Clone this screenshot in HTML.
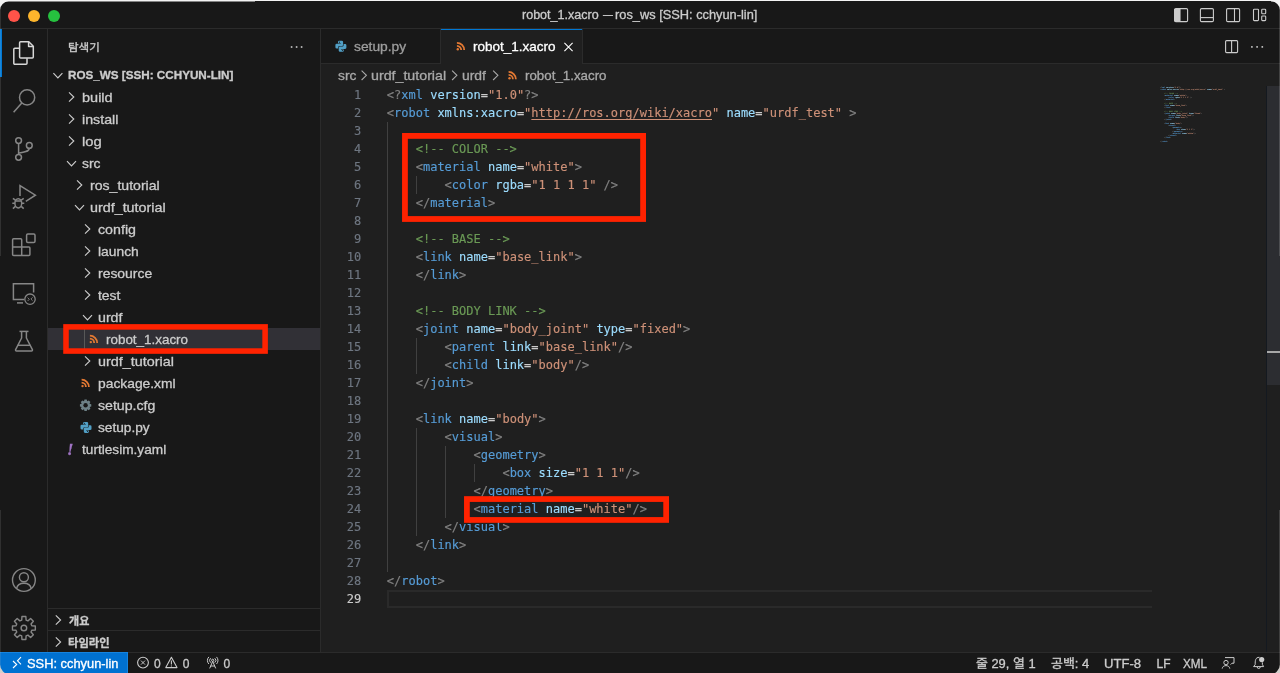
<!DOCTYPE html>
<html lang="ko"><head><meta charset="utf-8"><title>robot_1.xacro — ros_ws [SSH: cchyun-lin]</title>
<style>
html,body{margin:0;padding:0;width:1280px;height:673px;overflow:hidden;background:linear-gradient(#f3f3f3,#ececec 90%,#d3cfcb)}
#page{position:absolute;left:0;top:0;width:1280px;height:676px;background:#181818;clip-path:inset(1.5px 0.17px 1.5px 0.12px round 8.5px 8.5px 10px 10px);will-change:transform;transform:translateZ(0)}
#page>div,#page>span,#page>svg{position:absolute}
.x{font-family:"Liberation Sans","Noto Sans CJK KR",sans-serif;white-space:pre;line-height:20px;height:20px;transform-origin:0 50%;-webkit-text-stroke:0.3px currentColor}

.bg{background:#181818}
.ln{font-family:"DejaVu Sans Mono","Liberation Mono",monospace;font-size:12px;line-height:18px;height:18px;left:321px;width:40.2px;text-align:right;-webkit-text-stroke:0.15px currentColor;position:absolute;white-space:pre}
.cl{font-family:"DejaVu Sans Mono","Liberation Mono",monospace;font-size:12px;line-height:18px;height:18px;left:386.8px;position:absolute;white-space:pre;color:#cccccc;-webkit-text-stroke:0.15px currentColor}
.p{color:#808080}.t{color:#569cd6}.a{color:#9cdcfe}.s{color:#ce9178}.c{color:#6a9955}.d{color:#cccccc}
.u{text-decoration:underline;text-underline-offset:2px;text-decoration-thickness:1px}
.ig{width:1px;background:#404040}
.ml{font-family:"DejaVu Sans Mono","Liberation Mono",monospace;position:absolute;left:1160px;font-size:1.661px;line-height:2px;height:2px;white-space:pre;font-weight:bold}
.ml .u{text-decoration:none}
.red{border:6px solid #ff2200;box-sizing:border-box}
</style></head><body>
<div id="page">
<!-- title bar -->
<div style="left:0;top:0;width:1280px;height:28px;background:#181818"></div>
<div style="left:0;top:28px;width:1280px;height:1px;background:#2b2b2b"></div>
<!-- activity bar -->
<div style="left:0;top:29px;width:47px;height:623px;background:#181818"></div>
<div style="left:47px;top:29px;width:1px;height:623px;background:#2b2b2b"></div>
<div style="left:0;top:29px;width:2px;height:48px;background:#0078d4"></div>
<!-- sidebar -->
<div style="left:48px;top:29px;width:272px;height:623px;background:#181818"></div>
<div style="left:320px;top:29px;width:1px;height:623px;background:#2b2b2b"></div>
<div style="left:48px;top:328px;width:272px;height:22px;background:#313036"></div>
<div style="left:84px;top:328px;width:1px;height:22px;background:#585858"></div>
<div style="left:48px;top:608px;width:272px;height:1px;background:#2b2b2b"></div>
<div style="left:48px;top:630px;width:272px;height:1px;background:#2b2b2b"></div>
<!-- editor -->
<div style="left:321px;top:29px;width:959px;height:35px;background:#181818"></div>
<div style="left:321px;top:63px;width:959px;height:1px;background:#2b2b2b"></div>
<div style="left:440px;top:29px;width:1px;height:35px;background:#2b2b2b"></div>
<div style="left:441px;top:29px;width:141px;height:35px;background:#1f1f1f"></div>
<div style="left:441px;top:29px;width:141px;height:1px;background:#0078d4"></div>
<div style="left:582px;top:29px;width:1px;height:35px;background:#2b2b2b"></div>
<div style="left:321px;top:64px;width:959px;height:588px;background:#1f1f1f"></div>
<!-- current line -->
<div style="left:387px;top:590px;width:765px;height:18px;box-sizing:border-box;border:2px solid #2a2a2a;border-right:none"></div>
<div class="ig" style="left:387px;top:122px;height:450px"></div><div class="ig" style="left:416px;top:176px;height:18px"></div><div class="ig" style="left:416px;top:338px;height:36px"></div><div class="ig" style="left:416px;top:428px;height:108px"></div><div class="ig" style="left:445px;top:446px;height:72px"></div><div class="ig" style="left:474px;top:464px;height:18px"></div>
<!-- scrollbar -->
<div style="left:1266px;top:86px;width:1px;height:566px;background:#141920"></div>
<div style="left:1267px;top:86px;width:13px;height:299px;background:#2c2d31"></div>
<div style="left:1267px;top:351px;width:13px;height:2px;background:#a8a8a8"></div>
<!-- code -->
<div class="ln" style="top:86px;color:#6e7681">1</div><div class="cl" style="top:86px"><span class="p">&lt;?</span><span class="t">xml</span> <span class="a">version</span><span class="d">=</span><span class="s">&quot;1.0&quot;</span><span class="p">?&gt;</span></div><div class="ln" style="top:104px;color:#6e7681">2</div><div class="cl" style="top:104px"><span class="p">&lt;</span><span class="t">robot</span> <span class="a">xmlns:xacro</span><span class="d">=</span><span class="s">&quot;</span><span class="s u">http://ros.org/wiki/xacro</span><span class="s">&quot;</span> <span class="a">name</span><span class="d">=</span><span class="s">&quot;urdf_test&quot;</span> <span class="p">&gt;</span></div><div class="ln" style="top:122px;color:#6e7681">3</div><div class="ln" style="top:140px;color:#6e7681">4</div><div class="cl" style="top:140px">    <span class="c">&lt;!-- COLOR --&gt;</span></div><div class="ln" style="top:158px;color:#6e7681">5</div><div class="cl" style="top:158px">    <span class="p">&lt;</span><span class="t">material</span> <span class="a">name</span><span class="d">=</span><span class="s">&quot;white&quot;</span><span class="p">&gt;</span></div><div class="ln" style="top:176px;color:#6e7681">6</div><div class="cl" style="top:176px">        <span class="p">&lt;</span><span class="t">color</span> <span class="a">rgba</span><span class="d">=</span><span class="s">&quot;1 1 1 1&quot;</span> <span class="p">/&gt;</span></div><div class="ln" style="top:194px;color:#6e7681">7</div><div class="cl" style="top:194px">    <span class="p">&lt;/</span><span class="t">material</span><span class="p">&gt;</span></div><div class="ln" style="top:212px;color:#6e7681">8</div><div class="ln" style="top:230px;color:#6e7681">9</div><div class="cl" style="top:230px">    <span class="c">&lt;!-- BASE --&gt;</span></div><div class="ln" style="top:248px;color:#6e7681">10</div><div class="cl" style="top:248px">    <span class="p">&lt;</span><span class="t">link</span> <span class="a">name</span><span class="d">=</span><span class="s">&quot;base_link&quot;</span><span class="p">&gt;</span></div><div class="ln" style="top:266px;color:#6e7681">11</div><div class="cl" style="top:266px">    <span class="p">&lt;/</span><span class="t">link</span><span class="p">&gt;</span></div><div class="ln" style="top:284px;color:#6e7681">12</div><div class="ln" style="top:302px;color:#6e7681">13</div><div class="cl" style="top:302px">    <span class="c">&lt;!-- BODY LINK --&gt;</span></div><div class="ln" style="top:320px;color:#6e7681">14</div><div class="cl" style="top:320px">    <span class="p">&lt;</span><span class="t">joint</span> <span class="a">name</span><span class="d">=</span><span class="s">&quot;body_joint&quot;</span> <span class="a">type</span><span class="d">=</span><span class="s">&quot;fixed&quot;</span><span class="p">&gt;</span></div><div class="ln" style="top:338px;color:#6e7681">15</div><div class="cl" style="top:338px">        <span class="p">&lt;</span><span class="t">parent</span> <span class="a">link</span><span class="d">=</span><span class="s">&quot;base_link&quot;</span><span class="p">/&gt;</span></div><div class="ln" style="top:356px;color:#6e7681">16</div><div class="cl" style="top:356px">        <span class="p">&lt;</span><span class="t">child</span> <span class="a">link</span><span class="d">=</span><span class="s">&quot;body&quot;</span><span class="p">/&gt;</span></div><div class="ln" style="top:374px;color:#6e7681">17</div><div class="cl" style="top:374px">    <span class="p">&lt;/</span><span class="t">joint</span><span class="p">&gt;</span></div><div class="ln" style="top:392px;color:#6e7681">18</div><div class="ln" style="top:410px;color:#6e7681">19</div><div class="cl" style="top:410px">    <span class="p">&lt;</span><span class="t">link</span> <span class="a">name</span><span class="d">=</span><span class="s">&quot;body&quot;</span><span class="p">&gt;</span></div><div class="ln" style="top:428px;color:#6e7681">20</div><div class="cl" style="top:428px">        <span class="p">&lt;</span><span class="t">visual</span><span class="p">&gt;</span></div><div class="ln" style="top:446px;color:#6e7681">21</div><div class="cl" style="top:446px">            <span class="p">&lt;</span><span class="t">geometry</span><span class="p">&gt;</span></div><div class="ln" style="top:464px;color:#6e7681">22</div><div class="cl" style="top:464px">                <span class="p">&lt;</span><span class="t">box</span> <span class="a">size</span><span class="d">=</span><span class="s">&quot;1 1 1&quot;</span><span class="p">/&gt;</span></div><div class="ln" style="top:482px;color:#6e7681">23</div><div class="cl" style="top:482px">            <span class="p">&lt;/</span><span class="t">geometry</span><span class="p">&gt;</span></div><div class="ln" style="top:500px;color:#6e7681">24</div><div class="cl" style="top:500px">            <span class="p">&lt;</span><span class="t">material</span> <span class="a">name</span><span class="d">=</span><span class="s">&quot;white&quot;</span><span class="p">/&gt;</span></div><div class="ln" style="top:518px;color:#6e7681">25</div><div class="cl" style="top:518px">        <span class="p">&lt;/</span><span class="t">visual</span><span class="p">&gt;</span></div><div class="ln" style="top:536px;color:#6e7681">26</div><div class="cl" style="top:536px">    <span class="p">&lt;/</span><span class="t">link</span><span class="p">&gt;</span></div><div class="ln" style="top:554px;color:#6e7681">27</div><div class="ln" style="top:572px;color:#6e7681">28</div><div class="cl" style="top:572px"><span class="p">&lt;/</span><span class="t">robot</span><span class="p">&gt;</span></div><div class="ln" style="top:590px;color:#cccccc">29</div>
<!-- status bar -->
<div style="left:0;top:652px;width:1280px;height:23px;background:#181818"></div>
<div style="left:0;top:652px;width:1280px;height:1px;background:#2b2b2b"></div>
<div style="left:0;top:652px;width:128px;height:23px;background:#0071d1;box-sizing:border-box;border-top:1px solid #1683de;border-right:1px solid #1683de"></div>
<!-- traffic lights -->
<div style="left:8px;top:10px;width:12px;height:12px;border-radius:50%;background:#ff5349"></div>
<div style="left:28px;top:10px;width:12px;height:12px;border-radius:50%;background:#fdb52c"></div>
<div style="left:48px;top:10px;width:12px;height:12px;border-radius:50%;background:#26c13f"></div>
<span class="x" style="left:522.1px;top:4.7px;font-size:12.00px;font-weight:400;color:#cccccc;transform:scaleX(1.0444);">robot_1.xacro</span><span class="x" style="left:602.6px;top:4.9px;font-size:12.00px;font-weight:400;color:#cccccc;transform:scaleX(0.8250);">—</span><span class="x" style="left:614.9px;top:4.7px;font-size:12.00px;font-weight:400;color:#cccccc;transform:scaleX(1.0674);">ros_ws [SSH: cchyun-lin]</span><span class="x" style="left:67.9px;top:37.8px;font-size:10.40px;font-weight:400;color:#cccccc;transform:scaleX(1.1111);">탐색기</span><span class="x" style="left:67.7px;top:64.5px;font-size:11.00px;font-weight:700;color:#cccccc;transform:scaleX(1.0613);">ROS_WS [SSH: CCHYUN-LIN]</span><span class="x" style="left:82.0px;top:87.5px;font-size:13.00px;font-weight:400;color:#cccccc;transform:scaleX(1.1154);">build</span><span class="x" style="left:82.0px;top:109.5px;font-size:13.00px;font-weight:400;color:#cccccc;transform:scaleX(1.0938);">install</span><span class="x" style="left:82.0px;top:131.5px;font-size:13.00px;font-weight:400;color:#cccccc;transform:scaleX(1.1375);">log</span><span class="x" style="left:82.0px;top:153.5px;font-size:13.00px;font-weight:400;color:#cccccc;transform:scaleX(1.0706);">src</span><span class="x" style="left:90.0px;top:175.5px;font-size:13.00px;font-weight:400;color:#cccccc;transform:scaleX(1.0841);">ros_tutorial</span><span class="x" style="left:90.0px;top:197.5px;font-size:13.00px;font-weight:400;color:#cccccc;transform:scaleX(1.1015);">urdf_tutorial</span><span class="x" style="left:98.1px;top:219.5px;font-size:13.00px;font-weight:400;color:#cccccc;transform:scaleX(1.0941);">config</span><span class="x" style="left:98.1px;top:241.5px;font-size:13.00px;font-weight:400;color:#cccccc;transform:scaleX(1.0649);">launch</span><span class="x" style="left:98.1px;top:263.5px;font-size:13.00px;font-weight:400;color:#cccccc;transform:scaleX(1.0714);">resource</span><span class="x" style="left:98.1px;top:285.5px;font-size:13.00px;font-weight:400;color:#cccccc;transform:scaleX(1.0714);">test</span><span class="x" style="left:98.1px;top:307.5px;font-size:13.00px;font-weight:400;color:#cccccc;transform:scaleX(1.0909);">urdf</span><span class="x" style="left:106.0px;top:329.5px;font-size:13.00px;font-weight:400;color:#cccccc;transform:scaleX(1.0321);">robot_1.xacro</span><span class="x" style="left:98.1px;top:351.5px;font-size:13.00px;font-weight:400;color:#cccccc;transform:scaleX(1.1045);">urdf_tutorial</span><span class="x" style="left:98.1px;top:373.5px;font-size:13.00px;font-weight:400;color:#cccccc;transform:scaleX(1.0634);">package.xml</span><span class="x" style="left:98.1px;top:395.5px;font-size:13.00px;font-weight:400;color:#cccccc;transform:scaleX(1.0865);">setup.cfg</span><span class="x" style="left:98.1px;top:417.5px;font-size:13.00px;font-weight:400;color:#cccccc;transform:scaleX(1.0510);">setup.py</span><span class="x" style="left:82.0px;top:439.5px;font-size:13.00px;font-weight:400;color:#cccccc;transform:scaleX(1.0500);">turtlesim.yaml</span><span class="x" style="left:67.1px;top:440.3px;font-size:16.50px;font-weight:700;color:#a074c4;transform:scaleX(1.0000);font-family:'Liberation Serif',serif;font-style:italic;-webkit-text-stroke:0.3px #a074c4;">!</span><span class="x" style="left:69.0px;top:610.5px;font-size:11.00px;font-weight:700;color:#cccccc;transform:scaleX(1.0050);">개요</span><span class="x" style="left:68.0px;top:632.5px;font-size:11.00px;font-weight:700;color:#cccccc;transform:scaleX(1.0308);">타임라인</span><span class="x" style="left:353.5px;top:37.0px;font-size:13.00px;font-weight:400;color:#9d9d9d;transform:scaleX(1.0612);">setup.py</span><span class="x" style="left:472.5px;top:37.0px;font-size:13.00px;font-weight:400;color:#ffffff;transform:scaleX(1.0385);">robot_1.xacro</span><span class="x" style="left:337.5px;top:65.7px;font-size:13.00px;font-weight:400;color:#a9a9a9;transform:scaleX(1.0588);">src</span><span class="x" style="left:371.1px;top:65.7px;font-size:13.00px;font-weight:400;color:#a9a9a9;transform:scaleX(1.0940);">urdf_tutorial</span><span class="x" style="left:461.9px;top:65.7px;font-size:13.00px;font-weight:400;color:#a9a9a9;transform:scaleX(1.0682);">urdf</span><span class="x" style="left:525.0px;top:65.7px;font-size:13.00px;font-weight:400;color:#a9a9a9;transform:scaleX(1.0256);">robot_1.xacro</span><span class="x" style="left:27.2px;top:653.7px;font-size:12.00px;font-weight:400;color:#ffffff;transform:scaleX(1.0714);">SSH: cchyun-lin</span><span class="x" style="left:154.1px;top:653.7px;font-size:12.00px;font-weight:400;color:#cccccc;transform:scaleX(1.0000);">0</span><span class="x" style="left:182.7px;top:653.7px;font-size:12.00px;font-weight:400;color:#cccccc;transform:scaleX(1.0000);">0</span><span class="x" style="left:223.5px;top:653.7px;font-size:12.00px;font-weight:400;color:#cccccc;transform:scaleX(1.0000);">0</span><span class="x" style="left:975.7px;top:653.7px;font-size:12.00px;font-weight:400;color:#cccccc;transform:scaleX(1.0741);">줄 29, 열 1</span><span class="x" style="left:1050.7px;top:653.7px;font-size:12.00px;font-weight:400;color:#cccccc;transform:scaleX(1.0794);">공백: 4</span><span class="x" style="left:1103.9px;top:653.7px;font-size:12.00px;font-weight:400;color:#cccccc;transform:scaleX(1.0909);">UTF-8</span><span class="x" style="left:1156.5px;top:653.7px;font-size:12.00px;font-weight:400;color:#cccccc;transform:scaleX(1.0000);">LF</span><span class="x" style="left:1182.5px;top:653.7px;font-size:12.00px;font-weight:400;color:#cccccc;transform:scaleX(0.9720);">XML</span>
<div id="mini" style="left:1152px;top:80px;width:114px;height:80px;overflow:hidden"><div style="position:absolute;left:-1152px;top:-80px"><div class="ml" style="top:86px"><span class="p">&lt;?</span><span class="t">xml</span> <span class="a">version</span><span class="d">=</span><span class="s">&quot;1.0&quot;</span><span class="p">?&gt;</span></div><div class="ml" style="top:88px"><span class="p">&lt;</span><span class="t">robot</span> <span class="a">xmlns:xacro</span><span class="d">=</span><span class="s">&quot;</span><span class="s u">http://ros.org/wiki/xacro</span><span class="s">&quot;</span> <span class="a">name</span><span class="d">=</span><span class="s">&quot;urdf_test&quot;</span> <span class="p">&gt;</span></div><div class="ml" style="top:92px">    <span class="c">&lt;!-- COLOR --&gt;</span></div><div class="ml" style="top:94px">    <span class="p">&lt;</span><span class="t">material</span> <span class="a">name</span><span class="d">=</span><span class="s">&quot;white&quot;</span><span class="p">&gt;</span></div><div class="ml" style="top:96px">        <span class="p">&lt;</span><span class="t">color</span> <span class="a">rgba</span><span class="d">=</span><span class="s">&quot;1 1 1 1&quot;</span> <span class="p">/&gt;</span></div><div class="ml" style="top:98px">    <span class="p">&lt;/</span><span class="t">material</span><span class="p">&gt;</span></div><div class="ml" style="top:102px">    <span class="c">&lt;!-- BASE --&gt;</span></div><div class="ml" style="top:104px">    <span class="p">&lt;</span><span class="t">link</span> <span class="a">name</span><span class="d">=</span><span class="s">&quot;base_link&quot;</span><span class="p">&gt;</span></div><div class="ml" style="top:106px">    <span class="p">&lt;/</span><span class="t">link</span><span class="p">&gt;</span></div><div class="ml" style="top:110px">    <span class="c">&lt;!-- BODY LINK --&gt;</span></div><div class="ml" style="top:112px">    <span class="p">&lt;</span><span class="t">joint</span> <span class="a">name</span><span class="d">=</span><span class="s">&quot;body_joint&quot;</span> <span class="a">type</span><span class="d">=</span><span class="s">&quot;fixed&quot;</span><span class="p">&gt;</span></div><div class="ml" style="top:114px">        <span class="p">&lt;</span><span class="t">parent</span> <span class="a">link</span><span class="d">=</span><span class="s">&quot;base_link&quot;</span><span class="p">/&gt;</span></div><div class="ml" style="top:116px">        <span class="p">&lt;</span><span class="t">child</span> <span class="a">link</span><span class="d">=</span><span class="s">&quot;body&quot;</span><span class="p">/&gt;</span></div><div class="ml" style="top:118px">    <span class="p">&lt;/</span><span class="t">joint</span><span class="p">&gt;</span></div><div class="ml" style="top:122px">    <span class="p">&lt;</span><span class="t">link</span> <span class="a">name</span><span class="d">=</span><span class="s">&quot;body&quot;</span><span class="p">&gt;</span></div><div class="ml" style="top:124px">        <span class="p">&lt;</span><span class="t">visual</span><span class="p">&gt;</span></div><div class="ml" style="top:126px">            <span class="p">&lt;</span><span class="t">geometry</span><span class="p">&gt;</span></div><div class="ml" style="top:128px">                <span class="p">&lt;</span><span class="t">box</span> <span class="a">size</span><span class="d">=</span><span class="s">&quot;1 1 1&quot;</span><span class="p">/&gt;</span></div><div class="ml" style="top:130px">            <span class="p">&lt;/</span><span class="t">geometry</span><span class="p">&gt;</span></div><div class="ml" style="top:132px">            <span class="p">&lt;</span><span class="t">material</span> <span class="a">name</span><span class="d">=</span><span class="s">&quot;white&quot;</span><span class="p">/&gt;</span></div><div class="ml" style="top:134px">        <span class="p">&lt;/</span><span class="t">visual</span><span class="p">&gt;</span></div><div class="ml" style="top:136px">    <span class="p">&lt;/</span><span class="t">link</span><span class="p">&gt;</span></div><div class="ml" style="top:140px"><span class="p">&lt;/</span><span class="t">robot</span><span class="p">&gt;</span></div></div></div>
<svg id="icons" style="left:0;top:0" width="1280" height="673" viewBox="0 0 1280 673" fill="none"><path d="M53.40 73.20L57.90 77.90L62.40 73.20" stroke="#cccccc" stroke-width="1.15"/>
<path d="M69.00 92.30L73.80 97.00L69.00 101.70" stroke="#cccccc" stroke-width="1.1"/>
<path d="M69.00 114.30L73.80 119.00L69.00 123.70" stroke="#cccccc" stroke-width="1.1"/>
<path d="M69.00 136.30L73.80 141.00L69.00 145.70" stroke="#cccccc" stroke-width="1.1"/>
<path d="M67.00 161.20L71.50 165.90L76.00 161.20" stroke="#cccccc" stroke-width="1.15"/>
<path d="M77.00 180.30L81.80 185.00L77.00 189.70" stroke="#cccccc" stroke-width="1.1"/>
<path d="M75.00 205.20L79.50 209.90L84.00 205.20" stroke="#cccccc" stroke-width="1.15"/>
<path d="M85.00 224.30L89.80 229.00L85.00 233.70" stroke="#cccccc" stroke-width="1.1"/>
<path d="M85.00 246.30L89.80 251.00L85.00 255.70" stroke="#cccccc" stroke-width="1.1"/>
<path d="M85.00 268.30L89.80 273.00L85.00 277.70" stroke="#cccccc" stroke-width="1.1"/>
<path d="M85.00 290.30L89.80 295.00L85.00 299.70" stroke="#cccccc" stroke-width="1.1"/>
<path d="M83.00 315.20L87.50 319.90L92.00 315.20" stroke="#cccccc" stroke-width="1.15"/>
<path d="M85.00 356.30L89.80 361.00L85.00 365.70" stroke="#cccccc" stroke-width="1.1"/>
<path d="M55.80 615.30L60.60 620.00L55.80 624.70" stroke="#cccccc" stroke-width="1.1"/>
<path d="M55.80 637.30L60.60 642.00L55.80 646.70" stroke="#cccccc" stroke-width="1.1"/>
<g stroke="#e37933" stroke-width="1.8" fill="none"><circle cx="90.80" cy="342.10" r="1.2" fill="#e37933" stroke="none"/><path d="M89.90 338.70A4.3 4.3 0 0 1 94.20 343.00"/><path d="M89.90 335.70A7.3 7.3 0 0 1 97.20 343.00"/></g>
<g stroke="#e37933" stroke-width="1.8" fill="none"><circle cx="82.50" cy="386.10" r="1.2" fill="#e37933" stroke="none"/><path d="M81.60 382.70A4.3 4.3 0 0 1 85.90 387.00"/><path d="M81.60 379.70A7.3 7.3 0 0 1 88.90 387.00"/></g>
<path d="M91.28 404.15L91.28 406.45L89.59 406.89L89.55 407.00L90.43 408.50L88.80 410.13L87.30 409.25L87.19 409.29L86.75 410.98L84.45 410.98L84.01 409.29L83.90 409.25L82.40 410.13L80.77 408.50L81.65 407.00L81.61 406.89L79.92 406.45L79.92 404.15L81.61 403.71L81.65 403.60L80.77 402.10L82.40 400.47L83.90 401.35L84.01 401.31L84.45 399.62L86.75 399.62L87.19 401.31L87.30 401.35L88.80 400.47L90.43 402.10L89.55 403.60L89.59 403.71Z" fill="#6d8086"/><circle cx="85.6" cy="405.3" r="2.2" fill="#181818"/>
<g transform="translate(80.50 421.90)" fill="#519fc5"><path d="M3.9 0H6.4Q7.7 0 7.7 1.3V4Q7.7 5.3 6.4 5.3H4Q2.8 5.3 2.8 6.5V7.7H1.3Q0 7.7 0 6.4V4.2Q0 2.9 1.3 2.9H5.4V2.4H2.6V1.3Q2.6 0 3.9 0Z"/><path d="M3.9 0H6.4Q7.7 0 7.7 1.3V4Q7.7 5.3 6.4 5.3H4Q2.8 5.3 2.8 6.5V7.7H1.3Q0 7.7 0 6.4V4.2Q0 2.9 1.3 2.9H5.4V2.4H2.6V1.3Q2.6 0 3.9 0Z" transform="rotate(180 5.5 5.5)"/><circle cx="4" cy="1.35" r="0.55" fill="#181818"/><circle cx="7" cy="9.65" r="0.55" fill="#181818"/></g>
<path d="M361.60 70.60L366.40 75.30L361.60 80.00" stroke="#a9a9a9" stroke-width="1.1"/>
<path d="M452.10 70.60L456.90 75.30L452.10 80.00" stroke="#a9a9a9" stroke-width="1.1"/>
<path d="M493.10 70.60L497.90 75.30L493.10 80.00" stroke="#a9a9a9" stroke-width="1.1"/>
<g stroke="#e37933" stroke-width="1.8" fill="none"><circle cx="509.50" cy="78.30" r="1.2" fill="#e37933" stroke="none"/><path d="M508.60 74.90A4.3 4.3 0 0 1 512.90 79.20"/><path d="M508.60 71.90A7.3 7.3 0 0 1 515.90 79.20"/></g>
<g transform="translate(335.40 40.80)" fill="#519fc5"><path d="M3.9 0H6.4Q7.7 0 7.7 1.3V4Q7.7 5.3 6.4 5.3H4Q2.8 5.3 2.8 6.5V7.7H1.3Q0 7.7 0 6.4V4.2Q0 2.9 1.3 2.9H5.4V2.4H2.6V1.3Q2.6 0 3.9 0Z"/><path d="M3.9 0H6.4Q7.7 0 7.7 1.3V4Q7.7 5.3 6.4 5.3H4Q2.8 5.3 2.8 6.5V7.7H1.3Q0 7.7 0 6.4V4.2Q0 2.9 1.3 2.9H5.4V2.4H2.6V1.3Q2.6 0 3.9 0Z" transform="rotate(180 5.5 5.5)"/><circle cx="4" cy="1.35" r="0.55" fill="#181818"/><circle cx="7" cy="9.65" r="0.55" fill="#181818"/></g>
<g stroke="#e37933" stroke-width="1.8" fill="none"><circle cx="457.80" cy="49.20" r="1.2" fill="#e37933" stroke="none"/><path d="M456.90 45.80A4.3 4.3 0 0 1 461.20 50.10"/><path d="M456.90 42.80A7.3 7.3 0 0 1 464.20 50.10"/></g>
<path d="M564.4 42.9L572.6 51.1M572.6 42.9L564.4 51.1" stroke="#ffffff" stroke-width="1.1"/>
<g stroke="#d7d7d7" stroke-width="1.5" stroke-linejoin="round"><path d="M20.6 41.8H28.8L33.3 46.3V57.1A1 1 0 0 1 32.3 58.1H20.6A1 1 0 0 1 19.6 57.1V42.8A1 1 0 0 1 20.6 41.8Z"/><path d="M28.6 42V46.5H33.1"/><path d="M19.4 48.3H14.8A1 1 0 0 0 13.8 49.3V63.3A1 1 0 0 0 14.8 64.3H26A1 1 0 0 0 27 63.3V58.3"/></g>
<g stroke="#868686" stroke-width="1.5"><circle cx="27.1" cy="97.4" r="7.6"/><path d="M21.8 103L13.6 112.2"/></g>
<g stroke="#868686" stroke-width="1.5"><circle cx="18.6" cy="140.6" r="2.9"/><circle cx="29.3" cy="145.4" r="2.9"/><circle cx="18.6" cy="157.3" r="2.9"/><path d="M18.6 143.5V154.4"/><path d="M29.3 148.3C29.3 152 25 151.5 18.8 153"/></g>
<g stroke="#868686" stroke-width="1.5"><path d="M20 196V185.6L35.4 195.2L25.8 201.4" stroke-linejoin="miter"/><ellipse cx="18.3" cy="203.3" rx="3.4" ry="4.6"/><path d="M14.9 203.3H12.3M21.7 203.3H24.3M15.4 200.2L12.9 198.3M21.2 200.2L23.7 198.3M15.4 206.4L12.9 208.6M21.2 206.4L23.7 208.6M15.6 201H21"/></g>
<g stroke="#868686" stroke-width="1.5" stroke-linejoin="round"><path d="M13.6 238.8H20.7A1 1 0 0 1 21.7 239.8V247H28.9A1 1 0 0 1 29.9 248V254.4A1 1 0 0 1 28.9 255.4H13.6A1 1 0 0 1 12.6 254.4V239.8A1 1 0 0 1 13.6 238.8Z"/><path d="M12.6 247H21.7V255.4"/><rect x="26.6" y="234" width="8.4" height="8.4" rx="1.2"/></g>
<g stroke="#868686" stroke-width="1.5"><path d="M24 299.4H13.4V283.8H33.6V292.5"/><path d="M17 302.9H23"/><circle cx="30" cy="299.2" r="5.2" stroke-width="1.3"/><path d="M27.6 297.6L29.3 299.3L27.6 301M32.6 297.3L30.9 299L32.6 300.7" stroke-width="0.9"/></g>
<g stroke="#868686" stroke-width="1.5" stroke-linejoin="round"><path d="M19.5 331.4H28.5"/><path d="M21.6 331.4V338L15.6 349.6A1 1 0 0 0 16.5 351H31.5A1 1 0 0 0 32.4 349.6L26.4 338V331.4"/><path d="M17.8 345.3H30.2"/></g>
<g stroke="#868686" stroke-width="1.4"><circle cx="23.9" cy="580" r="11.4"/><circle cx="23.9" cy="577.3" r="4.5"/><path d="M16.6 588.6C17.8 581.5 30 581.5 31.2 588.6"/></g>
<g stroke="#868686" stroke-width="1.4" stroke-linejoin="round"><path d="M21.94 616.57L25.86 616.57L26.09 620.10L27.94 620.87L30.60 618.53L33.37 621.30L31.03 623.96L31.80 625.81L35.33 626.04L35.33 629.96L31.80 630.19L31.03 632.04L33.37 634.70L30.60 637.47L27.94 635.13L26.09 635.90L25.86 639.43L21.94 639.43L21.71 635.90L19.86 635.13L17.20 637.47L14.43 634.70L16.77 632.04L16.00 630.19L12.47 629.96L12.47 626.04L16.00 625.81L16.77 623.96L14.43 621.30L17.20 618.53L19.86 620.87L21.71 620.10Z"/><circle cx="23.9" cy="628" r="2.8"/></g>
<rect x="290.8" y="46.2" width="1.6" height="1.6" fill="#cccccc"/>
<rect x="295.8" y="46.2" width="1.6" height="1.6" fill="#cccccc"/>
<rect x="300.8" y="46.2" width="1.6" height="1.6" fill="#cccccc"/>
<g stroke="#cccccc" stroke-width="1.1"><rect x="1225.6" y="40.6" width="12" height="12" rx="1"/><path d="M1231.6 40.6V52.6"/></g>
<rect x="1251.1000000000001" y="46.1" width="1.6" height="1.6" fill="#cccccc"/>
<rect x="1256.3" y="46.1" width="1.6" height="1.6" fill="#cccccc"/>
<rect x="1261.5" y="46.1" width="1.6" height="1.6" fill="#cccccc"/>
<g stroke="#cccccc" stroke-width="1.1"><rect x="1174.6" y="8.6" width="13" height="13" rx="1.2"/><path d="M1174.6 9.6H1180V20.6H1174.6Z" fill="#cccccc"/><rect x="1200.4" y="8.6" width="13" height="13" rx="1.2"/><path d="M1200.4 17.6H1213.4"/><rect x="1226.6" y="8.6" width="13" height="13" rx="1.2"/><path d="M1234.5 8.6V21.6"/><rect x="1253.5" y="9.2" width="5" height="11.4" rx="0.8"/><rect x="1261.7" y="9.2" width="4" height="4.6" rx="0.8"/><rect x="1261.7" y="16" width="4" height="4.6" rx="0.8"/></g>
<g stroke="#ffffff" stroke-width="1.1"><path d="M13 661L16.7 664.5L13 668"/><path d="M21 657.2L17.5 660.8L21 664.4"/></g>
<g stroke="#cccccc" stroke-width="1.1"><circle cx="143" cy="662.6" r="5.4"/><path d="M141 660.6L145 664.6M145 660.6L141 664.6" stroke-width="0.95"/><path d="M171.4 657.3L177 667.6H165.8Z" stroke-linejoin="round"/><path d="M171.4 660.6V664.4M171.4 665.4V666.5"/></g>
<g stroke="#cccccc" stroke-width="1"><path d="M212.7 661.3L209.7 668.4M212.7 661.3L215.7 668.4M210.6 666H214.8"/><circle cx="212.7" cy="660.3" r="1.1"/><path d="M210.6 658.2A3 3 0 0 0 210.6 662.6M214.8 658.2A3 3 0 0 1 214.8 662.6M208.9 656.9A5 5 0 0 0 208.9 664M216.5 656.9A5 5 0 0 1 216.5 664"/></g>
<g stroke="#cccccc" stroke-width="1"><path d="M1225 657.6H1234V663.2H1232L1230.6 664.6"/><circle cx="1226" cy="662.6" r="2.2"/><path d="M1222.2 668.6C1222.6 664.6 1229.4 664.6 1229.8 668.6"/></g>
<g stroke="#cccccc" stroke-width="1"><path d="M1259.5 657.3C1255 657.3 1255.2 661 1255.2 664.5L1253.6 666.6H1263.6L1262.4 664.5V662.4"/><path d="M1257.2 667A1.5 1.5 0 0 0 1260.2 667"/><circle cx="1261.7" cy="659.6" r="2.6" fill="#cccccc" stroke="none"/></g></svg>
<svg id="boxes" style="left:0;top:0" width="1280" height="673" viewBox="0 0 1280 673" fill="none" stroke="#ff2200">
<rect x="404.95" y="135.9" width="238.15" height="83.1" stroke-width="5.8"/>
<rect x="66" y="326.9" width="199.1" height="24.15" stroke-width="5.55"/>
<rect x="466.9" y="499.05" width="199.25" height="20.9" stroke-width="5.75"/>
</svg>
</div>
</body></html>
